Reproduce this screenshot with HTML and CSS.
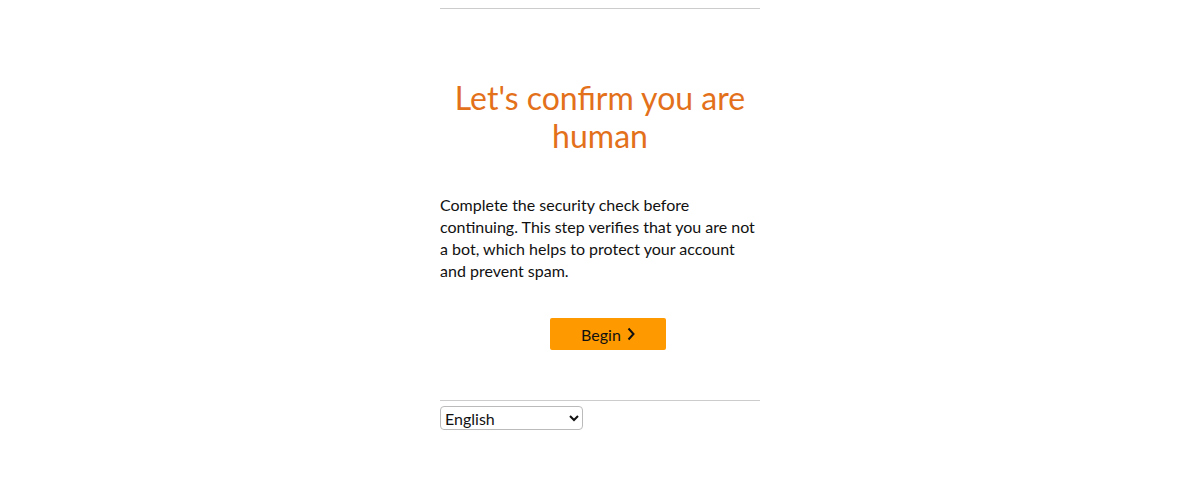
FILE: index.html
```html
<!DOCTYPE html>
<html lang="en">
<head>
<meta charset="utf-8">
<title>Let's confirm you are human</title>
<link rel="stylesheet" href="styles.css">
</head>
<body>
<div class="page">
  <hr class="rule">
  <main class="content">
    <h1 class="title">Let's confirm you are human</h1>
    <p class="desc">Complete the security check before continuing. This step verifies that you are not a bot, which helps to protect your account and prevent spam.</p>
    <div class="actions">
      <button class="begin" type="button">Begin
        <svg class="chev" width="8" height="14" viewBox="0 0 8 14" aria-hidden="true"><path d="M1.5 1.5 L6.5 7 L1.5 12.5" fill="none" stroke="#111" stroke-width="2"/></svg>
      </button>
    </div>
  </main>
  <hr class="rule">
  <div class="lang">
    <select class="lang-select">
      <option>English</option>
    </select>
  </div>
</div>
</body>
</html>
```

FILE: styles.css
```css
html, body {
  margin: 0;
  padding: 0;
  background: #fff;
}
body {
  padding-top: 8px;
  font-family: Lato, "Noto Sans", sans-serif;
  color: #111;
}
.page {
  width: 320px;
  margin: 0 auto;
  display: flex;
  flex-direction: column;
}
.rule {
  margin: 0;
  border: 0;
  border-top: 1px solid #cccccc;
  height: 0;
}
.content {
  display: flex;
  flex-direction: column;
  padding-top: 70px;
}
.title {
  margin: 0;
  font-weight: 400;
  font-size: 32px;
  line-height: 38px;
  color: #e3701a;
  text-align: center;
}
.desc {
  margin: 39px 0 0;
  font-size: 16px;
  line-height: 22px;
}
.actions {
  display: flex;
  padding: 36px 0 50px 110px;
}
.begin {
  width: 116px;
  height: 32px;
  border: 0;
  border-radius: 2px;
  background: #ff9900;
  font-family: inherit;
  font-size: 16px;
  color: #111;
  display: flex;
  align-items: center;
  justify-content: center;
  gap: 6px;
  padding: 0;
}
.lang {
  display: flex;
  padding-top: 5px;
}
.lang-select {
  width: 143px;
  height: 24px;
  font-family: inherit;
  font-size: 16px;
  border: 1px solid #bbb;
  border-radius: 4px;
  background: #fff;
  color: #111;
}
```
